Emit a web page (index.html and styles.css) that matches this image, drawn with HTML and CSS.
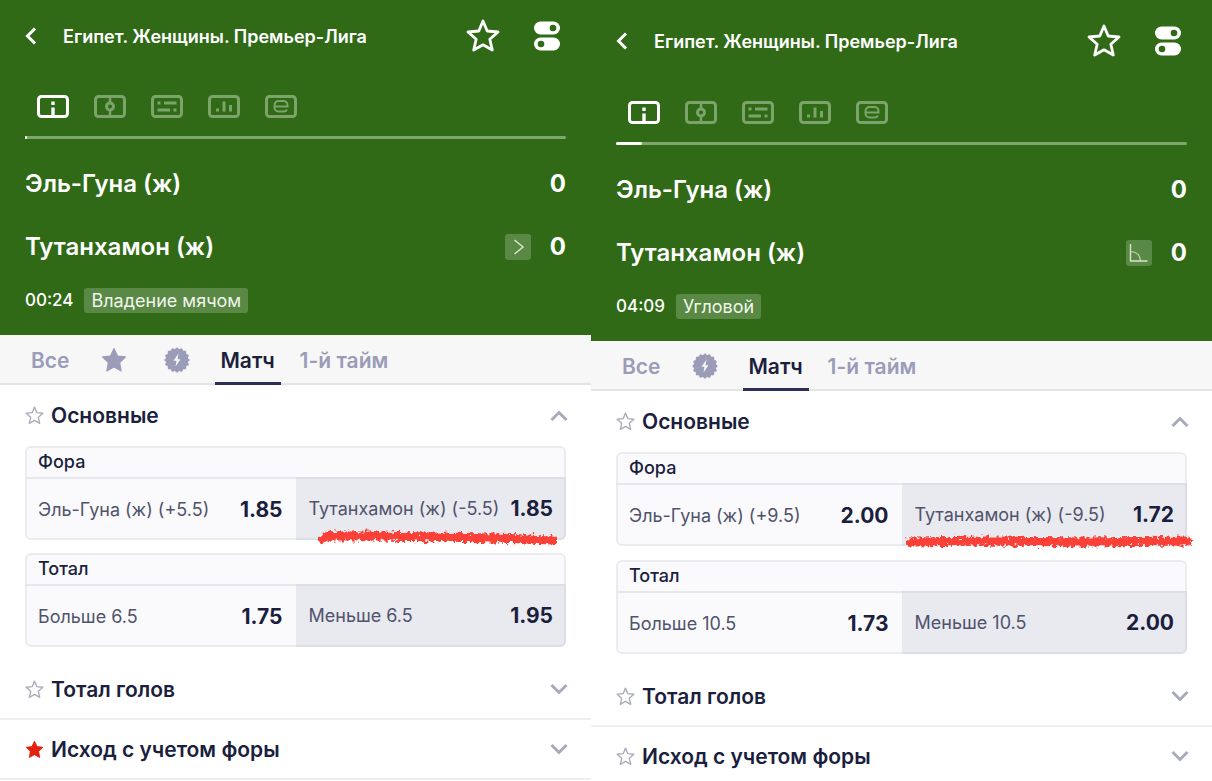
FILE: index.html
```
<!DOCTYPE html>
<html lang="ru">
	<head>
		<meta charset="utf-8">
		<meta name="viewport" content="width=device-width, initial-scale=1">
		<title>Египет. Женщины. Премьер-Лига</title>
		<link rel="stylesheet" href="styles.css">
	</head>
	<body>
		<svg class="sprite" aria-hidden="true">
			<symbol id="back" viewBox="0 0 12 18"><path d="M10 1.500L2.500 9l7.500 7.500" fill="none" stroke="currentColor" stroke-width="3"/></symbol>
			<symbol id="star" viewBox="0 0 34 34"><path d="M17 2l4.200 10 10.800 1-8.200 7.200 2.500 10.800L17 25.800 7.700 31l2.500-10.800L2 13l10.800-1z" fill="none" stroke="currentColor" stroke-width="2.800" stroke-linejoin="round"/></symbol>
			<symbol id="star-s" viewBox="0 0 34 34"><path d="M17 2l4.200 10 10.800 1-8.200 7.200 2.500 10.800L17 25.800 7.700 31l2.500-10.800L2 13l10.800-1z" fill="none" stroke="currentColor" stroke-width="2.400" stroke-linejoin="round"/></symbol>
			<symbol id="star-f" viewBox="0 0 34 34"><path d="M17 2l4.600 9.800 10.400 1.200-7.600 7.400 2 11L17 26.200 7.600 31.400l2-11L2 13l10.400-1.200z" fill="currentColor" stroke="currentColor" stroke-width="1.500" stroke-linejoin="round"/></symbol>
			<symbol id="toggles" viewBox="0 0 26 30">
				<rect y="0.500" width="26" height="13" rx="6.500" fill="currentColor"/><circle cx="19" cy="7" r="3.300" fill="#316a17"/>
				<rect y="16.500" width="26" height="13" rx="6.500" fill="currentColor"/><circle cx="7" cy="23" r="3.300" fill="#316a17"/>
			</symbol>
			<symbol id="info" viewBox="0 0 32 23"><rect x="1.500" y="1.500" width="29" height="20" rx="3" fill="none" stroke="currentColor" stroke-width="3"/><path d="M14.300 6.500h3.400v3.400h-3.400zM14.300 12.500h3.400V20h-3.400z" fill="currentColor"/></symbol>
			<symbol id="field" viewBox="0 0 32 23"><rect x="1.500" y="1.500" width="29" height="20" rx="3" fill="none" stroke="currentColor" stroke-width="3"/><path d="M16 2v5.500M16 15.500V21" stroke="currentColor" stroke-width="2.500"/><circle cx="16" cy="11.500" r="3.500" fill="none" stroke="currentColor" stroke-width="3"/></symbol>
			<symbol id="text" viewBox="0 0 32 23"><rect x="1.500" y="1.500" width="29" height="20" rx="3" fill="none" stroke="currentColor" stroke-width="3"/><path d="M6.500 8h3M13 8h12.500M6.500 15h12.500M22.500 15h3" stroke="currentColor" stroke-width="2.800"/></symbol>
			<symbol id="stats" viewBox="0 0 32 23"><rect x="1.500" y="1.500" width="29" height="20" rx="3" fill="none" stroke="currentColor" stroke-width="3"/><path d="M9.500 13.500v3M16 6.500v10M22.500 10v6.500" stroke="currentColor" stroke-width="3"/></symbol>
			<symbol id="event" viewBox="0 0 32 23"><rect x="1.500" y="1.500" width="29" height="20" rx="3" fill="none" stroke="currentColor" stroke-width="3"/><path d="M9.500 11.500h13V10a4 4 0 0 0-4-4h-5a4 4 0 0 0-4 4v2.500a4 4 0 0 0 4 4h5a4 4 0 0 0 3.500-2" fill="none" stroke="currentColor" stroke-width="2"/></symbol>
			<symbol id="badge" viewBox="0 0 26 26"><circle cx="13" cy="13" r="11.200" fill="currentColor"/><circle cx="13" cy="13" r="11" pathLength="16" fill="none" stroke="currentColor" stroke-width="3.200" stroke-linecap="round" stroke-dasharray="0 1"/><path d="M14.500 6.500L9.500 13.700h3L11.500 19.500l5-7.200h-3z" fill="#f7f7f8"/></symbol>
			<symbol id="down" viewBox="0 0 18 12"><path d="M1.500 2L9 9.500 16.500 2" fill="none" stroke="currentColor" stroke-width="3"/></symbol>
			<symbol id="up" viewBox="0 0 18 12"><path d="M1.500 10L9 2.500l7.500 7.500" fill="none" stroke="currentColor" stroke-width="3"/></symbol>
			<symbol id="attack" viewBox="0 0 26 26"><path d="M9.500 6l8.500 7-8.500 7" fill="none" stroke="currentColor" stroke-width="1.500"/></symbol>
			<symbol id="corner" viewBox="0 0 26 26"><path d="M4.500 4v17h17" fill="none" stroke="currentColor" stroke-width="1.400"/><path d="M4.500 11.500c6 0 10 4 10 9.500" fill="none" stroke="currentColor" stroke-width="1.200" opacity="0.800"/></symbol>
			<filter id="rough" filterUnits="userSpaceOnUse" x="-10" y="-15" width="320" height="50"><feTurbulence type="fractalNoise" baseFrequency="0.300" numOctaves="2" seed="4"/><feDisplacementMap in="SourceGraphic" scale="9" xChannelSelector="R" yChannelSelector="G"/></filter>
		</svg>

		<main class="screens">
			<section class="screen">
				<header class="match">
					<div class="topbar">
						<button class="icon" aria-label="Назад"><svg width="12" height="18"><use href="#back"/></svg></button>
						<h1>Египет. Женщины. Премьер-Лига</h1>
						<button class="icon" aria-label="В избранное"><svg width="34" height="34"><use href="#star"/></svg></button>
						<button class="icon" aria-label="Настройки"><svg width="26" height="30"><use href="#toggles"/></svg></button>
					</div>
					<div class="views">
						<button class="icon active" aria-label="Инфо"><svg width="32" height="23"><use href="#info"/></svg></button>
						<button class="icon" aria-label="Поле"><svg width="32" height="23"><use href="#field"/></svg></button>
						<button class="icon" aria-label="Текст"><svg width="32" height="23"><use href="#text"/></svg></button>
						<button class="icon" aria-label="Статистика"><svg width="32" height="23"><use href="#stats"/></svg></button>
						<button class="icon" aria-label="События"><svg width="32" height="23"><use href="#event"/></svg></button>
					</div>
					<div class="progress"><div class="done" style="width: 0.4%"></div></div>
					<div class="team"><span class="name">Эль-Гуна (ж)</span><span class="score">0</span></div>
					<div class="team"><span class="name">Тутанхамон (ж)</span><svg class="mark" width="26" height="26"><use href="#attack"/></svg><span class="score">0</span></div>
					<div class="status"><time>00:24</time><span class="state">Владение мячом</span></div>
				</header>
				<nav class="tabs">
					<button>Все</button>
					<button class="pic" aria-label="Избранное"><svg width="26" height="26"><use href="#star-f"/></svg></button>
					<button class="pic" aria-label="Быстрые"><svg width="26" height="26"><use href="#badge"/></svg></button>
					<button class="active">Матч</button>
					<button>1-й тайм</button>
				</nav>
				<div class="group open">
					<button class="icon fav" aria-label="В избранное"><svg width="19" height="19"><use href="#star-s"/></svg></button>
					<h2>Основные</h2>
					<button class="icon fold" aria-label="Свернуть"><svg width="18" height="12"><use href="#up"/></svg></button>
				</div>
				<div class="markets">
					<div class="market">
						<h3>Фора</h3>
						<div class="odds">
							<button><span>Эль-Гуна (ж) (+5.5)</span><b>1.85</b></button>
							<button class="dark"><span>Тутанхамон (ж) (-5.5)</span><b>1.85</b></button>
						</div>
						<svg class="marker" viewBox="0 0 245 20" preserveAspectRatio="none"><path d="M6 11L14 8l46 0 60 1 60 1 60 2" filter="url(#rough)"/></svg>
					</div>
					<div class="market">
						<h3>Тотал</h3>
						<div class="odds">
							<button><span>Больше 6.5</span><b>1.75</b></button>
							<button class="dark"><span>Меньше 6.5</span><b>1.95</b></button>
						</div>
					</div>
				</div>
				<div class="group">
					<button class="icon fav" aria-label="В избранное"><svg width="19" height="19"><use href="#star-s"/></svg></button>
					<h2>Тотал голов</h2>
					<button class="icon fold" aria-label="Развернуть"><svg width="18" height="12"><use href="#down"/></svg></button>
				</div>
				<div class="group">
					<button class="icon fav on" aria-label="Убрать из избранного"><svg width="19" height="19"><use href="#star-f"/></svg></button>
					<h2>Исход с учетом форы</h2>
					<button class="icon fold" aria-label="Развернуть"><svg width="18" height="12"><use href="#down"/></svg></button>
				</div>
			</section>

			<section class="screen later">
				<header class="match">
					<div class="topbar">
						<button class="icon" aria-label="Назад"><svg width="12" height="18"><use href="#back"/></svg></button>
						<h1>Египет. Женщины. Премьер-Лига</h1>
						<button class="icon" aria-label="В избранное"><svg width="34" height="34"><use href="#star"/></svg></button>
						<button class="icon" aria-label="Настройки"><svg width="26" height="30"><use href="#toggles"/></svg></button>
					</div>
					<div class="views">
						<button class="icon active" aria-label="Инфо"><svg width="32" height="23"><use href="#info"/></svg></button>
						<button class="icon" aria-label="Поле"><svg width="32" height="23"><use href="#field"/></svg></button>
						<button class="icon" aria-label="Текст"><svg width="32" height="23"><use href="#text"/></svg></button>
						<button class="icon" aria-label="Статистика"><svg width="32" height="23"><use href="#stats"/></svg></button>
						<button class="icon" aria-label="События"><svg width="32" height="23"><use href="#event"/></svg></button>
					</div>
					<div class="progress"><div class="done" style="width: 4.6%"></div></div>
					<div class="team"><span class="name">Эль-Гуна (ж)</span><span class="score">0</span></div>
					<div class="team"><span class="name">Тутанхамон (ж)</span><svg class="mark" width="26" height="26"><use href="#corner"/></svg><span class="score">0</span></div>
					<div class="status"><time>04:09</time><span class="state">Угловой</span></div>
				</header>
				<nav class="tabs">
					<button>Все</button>
					<button class="pic" aria-label="Быстрые"><svg width="26" height="26"><use href="#badge"/></svg></button>
					<button class="active">Матч</button>
					<button>1-й тайм</button>
				</nav>
				<div class="group open">
					<button class="icon fav" aria-label="В избранное"><svg width="19" height="19"><use href="#star-s"/></svg></button>
					<h2>Основные</h2>
					<button class="icon fold" aria-label="Свернуть"><svg width="18" height="12"><use href="#up"/></svg></button>
				</div>
				<div class="markets">
					<div class="market">
						<h3>Фора</h3>
						<div class="odds">
							<button><span>Эль-Гуна (ж) (+9.5)</span><b>2.00</b></button>
							<button class="dark"><span>Тутанхамон (ж) (-9.5)</span><b>1.72</b></button>
						</div>
						<svg class="marker wide" viewBox="0 0 290 20" preserveAspectRatio="none"><path d="M6 10l80-1 100 1 98-1" filter="url(#rough)"/></svg>
					</div>
					<div class="market">
						<h3>Тотал</h3>
						<div class="odds">
							<button><span>Больше 10.5</span><b>1.73</b></button>
							<button class="dark"><span>Меньше 10.5</span><b>2.00</b></button>
						</div>
					</div>
				</div>
				<div class="group">
					<button class="icon fav" aria-label="В избранное"><svg width="19" height="19"><use href="#star-s"/></svg></button>
					<h2>Тотал голов</h2>
					<button class="icon fold" aria-label="Развернуть"><svg width="18" height="12"><use href="#down"/></svg></button>
				</div>
				<div class="group">
					<button class="icon fav" aria-label="В избранное"><svg width="19" height="19"><use href="#star-s"/></svg></button>
					<h2>Исход с учетом форы</h2>
					<button class="icon fold" aria-label="Развернуть"><svg width="18" height="12"><use href="#down"/></svg></button>
				</div>
			</section>
		</main>
	</body>
</html>
```
FILE: styles.css
```
* {
	box-sizing: border-box;
}
body {
	margin: 0;
	background: #fff;
	color: #1b1f3d;
	font-family: Inter, "Liberation Sans", sans-serif;
}
h1, h2, h3 {
	margin: 0;
	font-weight: 600;
}
button {
	margin: 0;
	padding: 0;
	border: 0;
	background: none;
	color: inherit;
	font: inherit;
	cursor: pointer;
}
svg {
	display: block;
}
.sprite {
	position: absolute;
	width: 0;
	height: 0;
}
.screens {
	display: flex;
	height: 100vh;
	overflow: hidden;
}
.screen {
	flex: 591 1 0;
	min-width: 0;
}
.later {
	flex-grow: 621;
}

/* match header */
.match {
	padding: 0 25px 22px;
	background: #316a17;
	color: #fff;
}
.later .match {
	padding-top: 5px;
}
.topbar {
	display: flex;
	align-items: center;
	gap: 34px;
	height: 72px;
	padding-right: 6px;
}
.topbar h1 {
	flex: 1;
	margin-left: -8px;
	font-size: 18px;
	white-space: nowrap;
}
.views {
	display: flex;
	gap: 25px;
	margin-top: 23px;
	padding-left: 12px;
}
.later .views {
	margin-top: 24px;
}
.views .icon {
	color: #7ba36a;
}
.views .active {
	color: #fff;
}
.progress {
	height: 3px;
	margin: 18px 0 13px;
	border-radius: 2px;
	background: #7fa76c;
}
.done {
	height: 3px;
	border-radius: 2px;
	background: #fff;
}
.team {
	display: flex;
	align-items: center;
	gap: 19px;
	height: 63px;
	font-size: 24px;
	font-weight: 600;
}
.name {
	flex: 1;
}
.mark {
	border-radius: 3px;
	background: #5a8845;
	color: #d5e6cb;
}
.score {
	font-weight: 700;
}
.status {
	display: flex;
	align-items: center;
	gap: 11px;
	margin-top: 10px;
	font-size: 18px;
	line-height: 25px;
}
.status time {
	font-size: 17px;
	font-weight: 500;
}
.state {
	padding: 0 7px;
	border-radius: 3px;
	background: #5a8845;
	color: #f0f6ec;
}

/* tabs */
.tabs {
	display: flex;
	gap: 13px;
	height: 50px;
	padding: 0 25px;
	border-bottom: 2px solid #e4e4e8;
	background: #f7f7f8;
	color: #9a9cb8;
	font-size: 21px;
	font-weight: 600;
}
.tabs button {
	height: 50px;
	padding: 3px 6px 0;
	border-bottom: 3px solid transparent;
	white-space: nowrap;
}
.tabs .pic {
	padding: 3px 12px 0;
}
.tabs .active {
	border-color: #2b3054;
	color: #1b1f3d;
}

/* market groups */
.group {
	display: flex;
	align-items: center;
	gap: 7px;
	height: 60px;
	padding: 0 23px 0 25px;
	border-bottom: 2px solid #efeff2;
}
.open {
	height: 61px;
	border: 0;
}
.group h2 {
	flex: 1;
	font-size: 21px;
}
.fav, .fold {
	color: #a9abbb;
}
.on {
	color: #e3210f;
}
.markets {
	display: grid;
	gap: 13px;
	padding: 0 25px 13px;
}
.later .markets {
	gap: 14px;
}
.market {
	position: relative;
	height: 94px;
	border: 2px solid #ececf0;
	border-radius: 6px;
	background: #fafafc;
}
.market h3 {
	height: 29px;
	padding-left: 11px;
	font-size: 18px;
	font-weight: 500;
	line-height: 27px;
}
.odds {
	display: grid;
	grid-template-columns: 1fr 1fr;
	height: 63px;
	margin: 0 -2px -2px;
}
.odds button {
	display: flex;
	align-items: center;
	justify-content: space-between;
	padding: 0 13px;
	border-top: 2px solid #e6e6eb;
	color: #50536b;
	font-size: 18px;
	white-space: nowrap;
}
.odds .dark {
	padding-right: 11px;
	border: 2px solid #dddde6;
	border-left: 0;
	border-radius: 0 0 6px 0;
	background: #e9e9f0;
}
.odds b {
	color: #1b1f3d;
	font-size: 21px;
	font-weight: 700;
}
/* red pen stroke over the handicap price */
.marker {
	position: absolute;
	right: 6px;
	bottom: -10px;
	width: 45%;
	height: 20px;
	overflow: visible;
	pointer-events: none;
}
.wide {
	right: -8px;
	bottom: -8px;
	width: 51%;
}
.marker path {
	fill: none;
	stroke: #fb4038;
	stroke-width: 9;
	stroke-linecap: round;
	stroke-linejoin: round;
}
```
